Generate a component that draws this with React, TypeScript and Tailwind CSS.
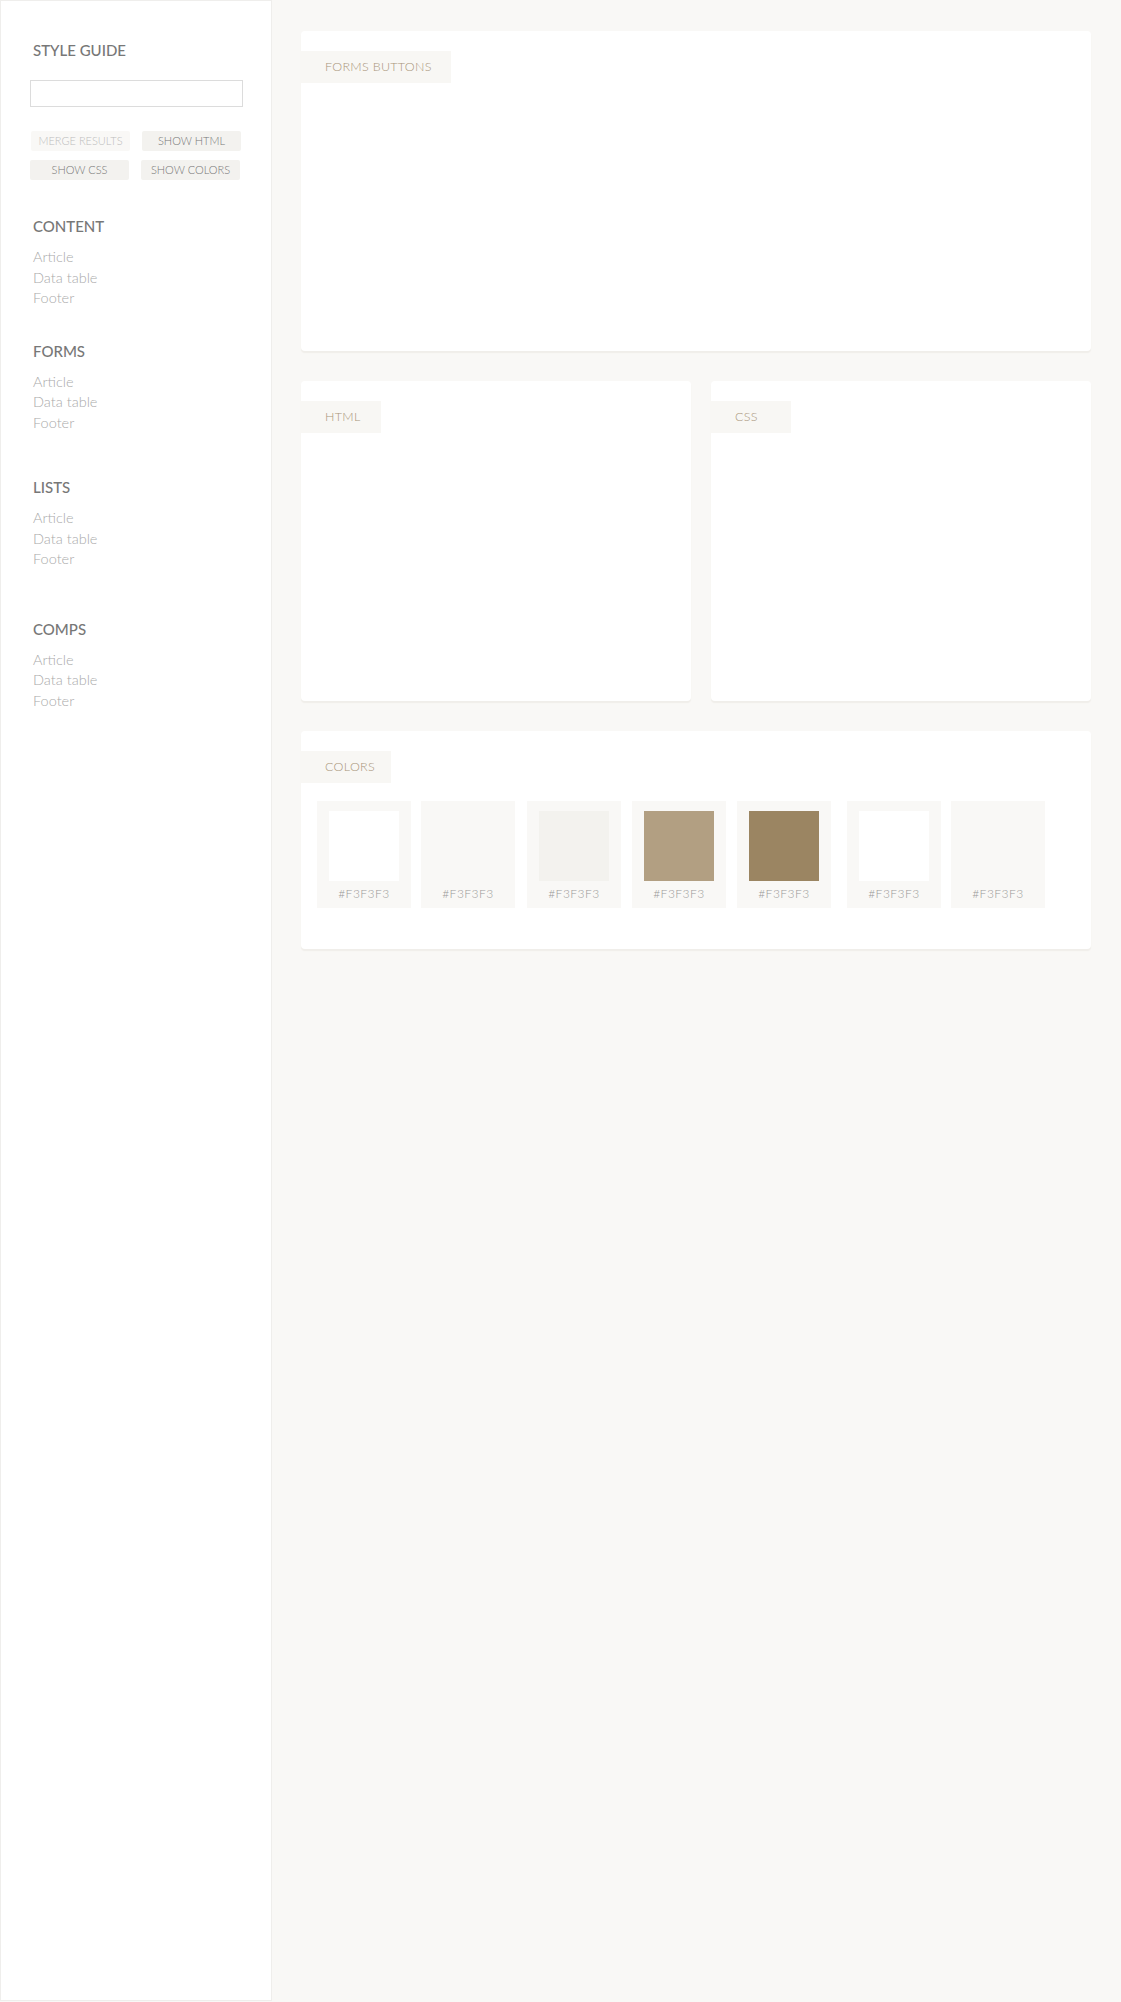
import React from 'react';

const navSections = [
    { title: 'CONTENT', mt: 'mt-[37px]' },
    { title: 'FORMS', mt: 'mt-[33px]' },
    { title: 'LISTS', mt: 'mt-[45px]' },
    { title: 'COMPS', mt: 'mt-[50px]' },
];

const swatches = [
    { color: 'bg-white', ml: 'ml-4' },
    { color: 'bg-[#f9f8f6]', ml: 'ml-[10px]' },
    { color: 'bg-[#f3f2ee]', ml: 'ml-[12px]' },
    { color: 'bg-[#b29f82]', ml: 'ml-[11px]' },
    { color: 'bg-[#9b8562]', ml: 'ml-[11px]' },
    { color: 'bg-white', ml: 'ml-4' },
    { color: 'bg-[#f9f8f6]', ml: 'ml-[10px]' },
];

const Tab: React.FC<{ label: string; width: string }> = ({ label, width }) => (
    <div className={`h-8 ${width} bg-[#f8f7f4] pl-6 flex items-center text-[12.5px] font-light tracking-[0.3px] text-[#a8957a]`}>
        {label}
    </div>
);

export default function App() {
    return (
        <div className="flex min-h-[2002px] bg-[#f9f8f6] font-['Lato',sans-serif]">
            {/* Sidebar */}
            <aside className="w-[272px] h-[2001px] shrink-0 bg-white border border-[#efeeec] pt-[40px]">
                <h1 className="pl-[32px] text-[15px] leading-[18px] font-medium text-[#777]">STYLE GUIDE</h1>
                <input
                    type="text"
                    className="block mt-[21px] ml-[29px] w-[213px] h-[27px] border border-[#dcdcdc] bg-white outline-none"
                />
                <div className="flex mt-[24px] ml-[30px] gap-[12px]">
                    <button className="w-[99px] h-[20px] bg-[#f9f8f6] rounded-[2px] text-[11px] font-light text-[#bdbdbd]">MERGE RESULTS</button>
                    <button className="w-[99px] h-[20px] bg-[#f3f2ef] rounded-[2px] text-[11px] font-light text-[#777]">SHOW HTML</button>
                </div>
                <div className="flex mt-[9px] ml-[29px] gap-[12px]">
                    <button className="w-[99px] h-[20px] bg-[#f3f2ef] rounded-[2px] text-[11px] font-light text-[#777]">SHOW CSS</button>
                    <button className="w-[99px] h-[20px] bg-[#f3f2ef] rounded-[2px] text-[11px] font-light text-[#777]">SHOW COLORS</button>
                </div>

                {navSections.map((s) => (
                    <div key={s.title} className={`${s.mt} pl-[32px]`}>
                        <h2 className="text-[15px] leading-[18px] font-medium text-[#777]">{s.title}</h2>
                        <ul className="mt-[12px] text-[14.5px] leading-[20.5px] font-light text-[#aaa]">
                            <li>Article</li>
                            <li>Data table</li>
                            <li>Footer</li>
                        </ul>
                    </div>
                ))}
            </aside>

            {/* Main */}
            <main className="flex-1 pl-[29px] pr-[30px] pt-[31px]">
                <section className="h-[320px] pt-5 bg-white rounded shadow-[0_2px_1px_#f0eeea]">
                    <Tab label="FORMS BUTTONS" width="w-[150px]" />
                </section>

                <div className="flex gap-5 mt-[30px]">
                    <section className="w-[390px] h-[320px] pt-5 bg-white rounded shadow-[0_2px_1px_#f0eeea]">
                        <Tab label="HTML" width="w-[80px]" />
                    </section>
                    <section className="flex-1 h-[320px] pt-5 bg-white rounded shadow-[0_2px_1px_#f0eeea]">
                        <Tab label="CSS" width="w-[80px]" />
                    </section>
                </div>

                <section className="mt-[30px] h-[218px] pt-5 bg-white rounded shadow-[0_2px_1px_#f0eeea]">
                    <Tab label="COLORS" width="w-[90px]" />
                    <div className="flex mt-[18px]">
                        {swatches.map((s, i) => (
                            <div key={i} className={`${s.ml} w-[94px] h-[107px] bg-[#f9f8f6] pt-[10px] flex flex-col items-center`}>
                                <div className={`w-[70px] h-[70px] ${s.color}`} />
                                <div className="mt-[6px] text-[12px] leading-[14px] font-light tracking-[0.5px] text-[#999]">#F3F3F3</div>
                            </div>
                        ))}
                    </div>
                </section>
            </main>
        </div>
    );
}
